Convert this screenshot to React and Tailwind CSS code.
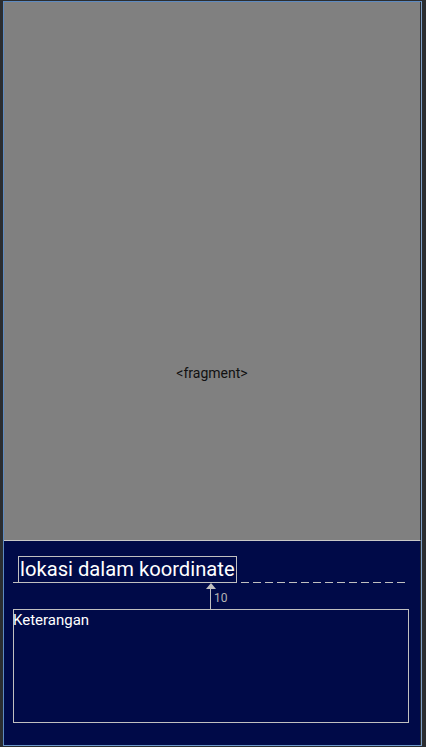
export default function App() {
  return (
    <div className="w-[426px] h-[747px] bg-[#2b2d30] flex pl-[3px] pr-[4px] pt-[1px] pb-[1px] font-['Roboto',sans-serif]">
      <div className="flex-1 flex flex-col border-t border-l border-[#5d8ac0] border-r border-r-[#7fa0c8] border-b border-b-[#6e9acc]">
        {/* fragment preview */}
        <div className="h-[538px] bg-[#808080] flex items-center justify-center border-r border-r-[#2b2d30]">
          <span className="text-[14px] text-[#111111] mt-[204px]">&lt;fragment&gt;</span>
        </div>

        {/* form area */}
        <div className="flex-1 bg-[#000a48] border-t border-[#c8c8c8] border-r border-r-[#2b2d30] px-[9px] pt-[15px]">
          <div className="flex items-end">
            <div className="w-[5px] border-b border-[#c0c0c0]" />
            <div className="h-[27px] border border-[#c0c0c0] px-[1px] flex items-center">
              <span className="text-[20.2px] leading-none text-white">lokasi dalam koordinate</span>
            </div>
            <div className="flex-1 ml-[4px] mr-[6px] h-px bg-[repeating-linear-gradient(90deg,#c0c0c0_0_8px,transparent_8px_12px)]" />
          </div>
          <div className="h-[26px] flex">
            <div className="w-[192px]" />
            <div className="relative flex flex-col items-center w-[11px]">
              <div className="w-0 h-0 border-l-[5px] border-r-[5px] border-b-[6px] border-l-transparent border-r-transparent border-b-[#c0c0c0]" />
              <div className="flex-1 w-px bg-[#c0c0c0]" />
            </div>
            <span className="text-[12px] text-[#b4b4b4] pt-[6px] ml-[-2px]">10</span>
          </div>
          <div className="h-[114px] w-[396px] border border-[#c0c0c0]">
            <span className="text-[15px] leading-none text-white block pt-[3px] ml-[-1px]">Keterangan</span>
          </div>
        </div>
      </div>
    </div>
  );
}
